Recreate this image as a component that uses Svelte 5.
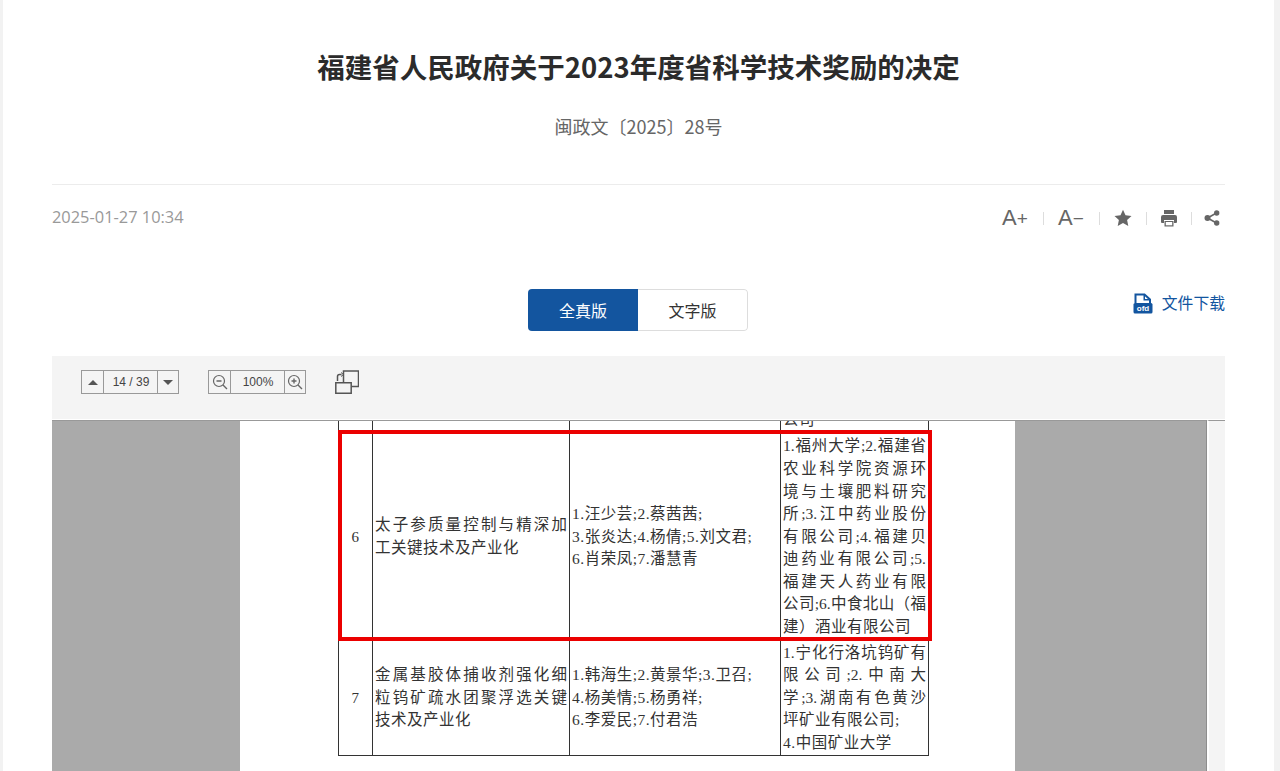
<script>
  let mode = $state('full');

  // rows of the scanned table, each line of the narrow cells is set by hand like the PDF
  const rows = [
    {
      no: '6',
      h: 207,
      title: [['太子参质量控制与精深加', 1], ['工关键技术及产业化', 0]],
      people: ['1.汪少芸;2.蔡茜茜;', '3.张炎达;4.杨倩;5.刘文君;', '6.肖荣凤;7.潘慧青'],
      org: [
        ['1.福州大学;2.福建省', 1],
        ['农业科学院资源环', 1],
        ['境与土壤肥料研究', 1],
        ['所;3.江中药业股份', 1],
        ['有限公司;4.福建贝', 1],
        ['迪药业有限公司;5.', 1],
        ['福建天人药业有限', 1],
        ['公司;6.中食北山（福', 1],
        ['建）酒业有限公司', 0]
      ]
    },
    {
      no: '7',
      h: 115,
      title: [['金属基胶体捕收剂强化细', 1], ['粒钨矿疏水团聚浮选关键', 1], ['技术及产业化', 0]],
      people: ['1.韩海生;2.黄景华;3.卫召;', '4.杨美情;5.杨勇祥;', '6.李爱民;7.付君浩'],
      org: [
        ['1.宁化行洛坑钨矿有', 1],
        ['限公司;2.中南大', 1],
        ['学;3.湖南有色黄沙', 1],
        ['坪矿业有限公司;', 0],
        ['4.中国矿业大学', 0]
      ]
    }
  ];
</script>

<div class="article">
  <h1>福建省人民政府关于2023年度省科学技术奖励的决定</h1>
  <p class="docno">闽政文〔2025〕28号</p>

  <div class="meta">
    <span class="date">2025-01-27 10:34</span>
    <div class="actions">
      <span class="font-btn">A<small>+</small></span>
      <i class="sep"></i>
      <span class="font-btn">A<small>−</small></span>
      <i class="sep"></i>
      <svg width="18" height="18" viewBox="0 0 18 18"><path fill="#666" d="M9 .8l2.500 5.500 6 .7-4.400 4.100 1.200 5.900L9 14.100l-5.300 2.900 1.200-5.900L.5 7l6-.7z"/></svg>
      <i class="sep"></i>
      <svg width="16" height="18" viewBox="0 0 16 18"><path fill="#666" d="M3 1h10v4H3zM2 6h12a2 2 0 0 1 2 2v5a1 1 0 0 1-1 1h-2v-3H3v3H1a1 1 0 0 1-1-1V8a2 2 0 0 1 2-2z"/><path fill="#666" d="M3.500 12h9v5.500h-9z"/><path fill="#fff" d="M4.800 13h6.400v3.300H4.800z"/></svg>
      <i class="sep"></i>
      <svg class="share" width="16" height="16" viewBox="0 0 16 16"><path stroke="#666" stroke-width="1.500" d="M3.500 8L12.500 3M3.500 8l9 5"/><circle cx="3.500" cy="8" r="3" fill="#666"/><circle cx="12.700" cy="3" r="2.700" fill="#666"/><circle cx="12.700" cy="13" r="2.700" fill="#666"/></svg>
    </div>
  </div>

  <div class="switch-row">
    <div class="tabs">
      <button class="tab" class:active={mode === 'full'} onclick={() => (mode = 'full')}>全真版</button>
      <button class="tab" class:active={mode === 'text'} onclick={() => (mode = 'text')}>文字版</button>
    </div>
    <a class="download" href="#top">
      <svg width="20" height="21" viewBox="0 0 20 21">
        <path fill="none" stroke="#13559f" stroke-width="2" d="M2.500 10V1.500h9l5.500 5V10"/>
        <path fill="#13559f" d="M10.500 1.500h1.500V6h5.500v1.500h-7z"/>
        <rect x="0.500" y="10" width="19" height="10.500" rx="1.500" fill="#13559f"/>
        <text x="10" y="18" class="doc-type">ofd</text>
      </svg>
      <span>文件下载</span>
    </a>
  </div>

  <div class="toolbar">
    <div class="group">
      <button class="cell arrow" aria-label="上一页"><i class="up"></i></button>
      <span class="cell value">14 / 39</span>
      <button class="cell arrow last" aria-label="下一页"><i class="down"></i></button>
    </div>
    <div class="group">
      <button class="cell arrow" aria-label="缩小">
        <svg width="16" height="16" viewBox="0 0 16 16"><circle cx="7" cy="7" r="5.500" fill="none" stroke="#666" stroke-width="1.200"/><path stroke="#666" stroke-width="1.400" d="M4.500 7h5M11 11l4 4"/></svg>
      </button>
      <span class="cell value">100%</span>
      <button class="cell arrow last" aria-label="放大">
        <svg width="16" height="16" viewBox="0 0 16 16"><circle cx="7" cy="7" r="5.500" fill="none" stroke="#666" stroke-width="1.200"/><path stroke="#666" stroke-width="1.400" d="M4.500 7h5M7 4.500v5M11 11l4 4"/></svg>
      </button>
    </div>
    <svg class="rotate" width="24" height="24" viewBox="0 0 24 24" fill="none" stroke="#555" stroke-width="1.500">
      <path d="M.8 12.800h15.400v10.500H.8z"/>
      <path d="M8.500 12.500V1h15v15.500h-7"/>
      <path d="M6.500 4.500H4.500a2 2 0 0 0-2 2V11"/>
      <path d="M6 2.500L8.500 4.500 6 6.500" stroke-width="1"/>
    </svg>
  </div>

  <div class="canvas">
    <div class="pane">
      <div class="sheet">
        <table>
          <colgroup><col class="c1" /><col class="c2" /><col class="c3" /><col class="c4" /></colgroup>
          <tbody>
            <tr class="cut">
              <td></td><td></td><td></td>
              <td><span class="line">公司</span></td>
            </tr>
            {#each rows as row}
              <tr style="height: {row.h}px">
                <td class="no">{row.no}</td>
                <td class="txt">
                  {#each row.title as [text, fit]}<span class="line" class:fit>{text}</span>{/each}
                </td>
                <td class="txt">
                  {#each row.people as text}<span class="line">{text}</span>{/each}
                </td>
                <td class="txt">
                  {#each row.org as [text, fit]}<span class="line" class:fit>{text}</span>{/each}
                </td>
              </tr>
            {/each}
          </tbody>
        </table>
        <div class="highlight"></div>
      </div>
    </div>
    <div class="scrolltrack"></div>
  </div>
</div>

<style>
  :global(html), :global(body) {
    margin: 0;
    height: 771px;
    overflow: hidden;
    background: #f2f2f2;
  }

  .article {
    box-sizing: border-box;
    width: 1271px;
    height: 771px;
    margin-left: 3px;
    padding: 0 49px;
    background: #fff;
    overflow: hidden;
    font-family: "Noto Sans CJK SC", "Liberation Sans", sans-serif;
  }

  h1 {
    margin: 0;
    padding-top: 46px;
    font-size: 27.500px;
    line-height: 40px;
    font-weight: 700;
    color: #2b2b2b;
    text-align: center;
  }

  .docno {
    margin: 0;
    padding-top: 28px;
    height: 70px;
    font-size: 18px;
    line-height: 24px;
    color: #666;
    text-align: center;
    border-bottom: 1px solid #ececec;
  }

  .meta {
    display: flex;
    justify-content: space-between;
    align-items: center;
    height: 66px;
  }

  .date {
    margin-bottom: 4px;
    font-size: 16.400px;
    color: #999;
    font-family: "Open Sans", "Noto Sans CJK SC", sans-serif;
  }

  .actions {
    display: flex;
    align-items: center;
    gap: 14px;
    padding-right: 5px;
    color: #666;
  }

  .font-btn {
    width: 27px;
    font-family: "Liberation Sans", sans-serif;
    font-size: 22px;
    line-height: 24px;
    white-space: nowrap;
  }

  .font-btn small {
    font-size: 19px;
  }

  .sep {
    width: 1px;
    height: 13px;
    background: #ddd;
  }

  .share {
    margin-left: -2px;
  }

  .switch-row {
    position: relative;
    display: flex;
    justify-content: center;
    padding: 38px 1px 0 0;
    height: 67px;
  }

  .tabs {
    display: flex;
    width: 220px;
    height: 42px;
    border-radius: 4px;
    overflow: hidden;
  }

  .tab {
    flex: 1;
    padding: 0;
    border: 1px solid #ddd;
    border-left: none;
    border-radius: 0 4px 4px 0;
    background: #fff;
    color: #333;
    font-family: inherit;
    font-size: 16px;
    cursor: pointer;
  }

  .tab.active {
    flex: 0 0 110px;
    border: none;
    border-radius: 0;
    background: #13559f;
    color: #fff;
  }

  .download {
    position: absolute;
    right: 0;
    top: 40px;
    display: flex;
    align-items: center;
    gap: 9px;
    color: #13559f;
    font-size: 15.800px;
    line-height: 24px;
    text-decoration: none;
  }

  .doc-type {
    fill: #fff;
    font-family: "Liberation Sans", sans-serif;
    font-size: 8px;
    font-weight: 700;
    text-anchor: middle;
  }

  .toolbar {
    display: flex;
    align-items: center;
    height: 63px;
    padding: 0 0 11px 29px;
    box-sizing: border-box;
    background: #f4f4f4;
    gap: 29px;
  }

  .group {
    display: flex;
    height: 24px;
    box-sizing: border-box;
    border: 1px solid #999;
  }

  .cell {
    display: flex;
    align-items: center;
    justify-content: center;
    box-sizing: border-box;
    padding: 0;
    background: #f4f4f4;
    border: none;
  }

  .arrow {
    width: 22px;
    border-right: 1px solid #999;
  }

  .arrow.last {
    width: 20px;
    border-right: none;
  }

  .value {
    width: 54px;
    padding-left: 1px;
    border-right: 1px solid #999;
    font-family: "Liberation Sans", sans-serif;
    font-size: 12px;
    color: #444;
  }

  .up, .down {
    width: 0;
    height: 0;
    border-left: 5px solid transparent;
    border-right: 5px solid transparent;
  }

  .up { border-bottom: 5px solid #555; }
  .down { border-top: 5px solid #555; }

  .rotate {
    flex: none;
  }

  .canvas {
    display: flex;
    height: 352px;
    border-top: 1px solid #fff;
    background: #f2f2f2;
  }

  .pane {
    flex: 0 0 1155px;
    display: flex;
    padding-left: 188px;
    box-sizing: border-box;
    background: #aaa;
    border-top: 1px solid #999;
    border-right: 1px solid #8e8e8e;
    overflow: hidden;
  }

  .sheet {
    position: relative;
    width: 775px;
    height: 351px;
    background: #fff;
    overflow: hidden;
    padding-left: 98px;
    box-sizing: border-box;
  }

  .scrolltrack {
    flex: 1;
    border-left: 2px solid #fff;
    border-top: 1px solid #999;
    background: #f4f4f4;
  }

  table {
    width: 590px;
    margin-top: -38px;
    border-collapse: collapse;
    table-layout: fixed;
    color: #333;
    font-family: "Liberation Serif", "Noto Sans CJK SC", serif;
    font-size: 15.500px;
    letter-spacing: .5px;
    line-height: 22.600px;
  }

  .c1 { width: 34px; }
  .c2 { width: 197px; }
  .c3 { width: 211px; }
  .c4 { width: 148px; }

  td {
    padding: 0 2px;
    border: 1.200px solid #333;
    vertical-align: middle;
    overflow: hidden;
  }

  .cut {
    height: 50px;
  }

  .cut td {
    vertical-align: bottom;
    padding-bottom: 1px;
  }

  .no {
    text-align: center;
    font-size: 15px;
    padding: 0;
  }

  .line {
    display: block;
    white-space: nowrap;
  }

  .fit {
    white-space: normal;
    letter-spacing: 0;
    text-align: justify;
    text-align-last: justify;
  }

  .highlight {
    position: absolute;
    left: 98px;
    top: 9px;
    width: 594px;
    height: 211px;
    box-sizing: border-box;
    border: 4px solid #eb0000;
    pointer-events: none;
  }
</style>
